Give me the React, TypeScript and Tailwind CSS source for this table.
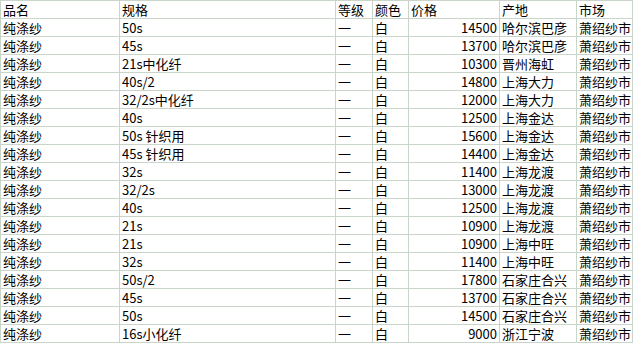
const rows: [string, string, string][] = [
  ["50s", "14500", "哈尔滨巴彦"],
  ["45s", "13700", "哈尔滨巴彦"],
  ["21s中化纤", "10300", "晋州海虹"],
  ["40s/2", "14800", "上海大力"],
  ["32/2s中化纤", "12000", "上海大力"],
  ["40s", "12500", "上海金达"],
  ["50s 针织用", "15600", "上海金达"],
  ["45s 针织用", "14400", "上海金达"],
  ["32s", "11400", "上海龙渡"],
  ["32/2s", "13000", "上海龙渡"],
  ["40s", "12500", "上海龙渡"],
  ["21s", "10900", "上海龙渡"],
  ["21s", "10900", "上海中旺"],
  ["32s", "11400", "上海中旺"],
  ["50s/2", "17800", "石家庄合兴"],
  ["45s", "13700", "石家庄合兴"],
  ["50s", "14500", "石家庄合兴"],
  ["16s小化纤", "9000", "浙江宁波"],
]

const cell = "h-[18px] border border-[#cad5ca] px-[2px] py-0 overflow-hidden whitespace-nowrap leading-[17px]"

function App() {
  return (
    <div className="h-[343px] w-[638px] bg-white text-[13px] text-black [font-family:'Noto_Sans_CJK_SC',sans-serif]">
      <table className="w-[632px] table-fixed border-collapse">
        <colgroup>
          <col className="w-[119px]" />
          <col className="w-[216px]" />
          <col className="w-[37px]" />
          <col className="w-[36px]" />
          <col className="w-[91px]" />
          <col className="w-[77px]" />
          <col className="w-[56px]" />
        </colgroup>
        <tbody>
          <tr>
            <td className={cell}>品名</td>
            <td className={cell}>规格</td>
            <td className={cell}>等级</td>
            <td className={cell}>颜色</td>
            <td className={cell}>价格</td>
            <td className={cell}>产地</td>
            <td className={cell}>市场</td>
          </tr>
          {rows.map(([spec, price, origin], i) => (
            <tr key={i}>
              <td className={cell}>纯涤纱</td>
              <td className={cell}>{spec}</td>
              <td className={cell}>一</td>
              <td className={cell}>白</td>
              <td className={cell + " text-right"}>{price}</td>
              <td className={cell}>{origin}</td>
              <td className={cell}>萧绍纱市</td>
            </tr>
          ))}
        </tbody>
      </table>
    </div>
  )
}

export default App
